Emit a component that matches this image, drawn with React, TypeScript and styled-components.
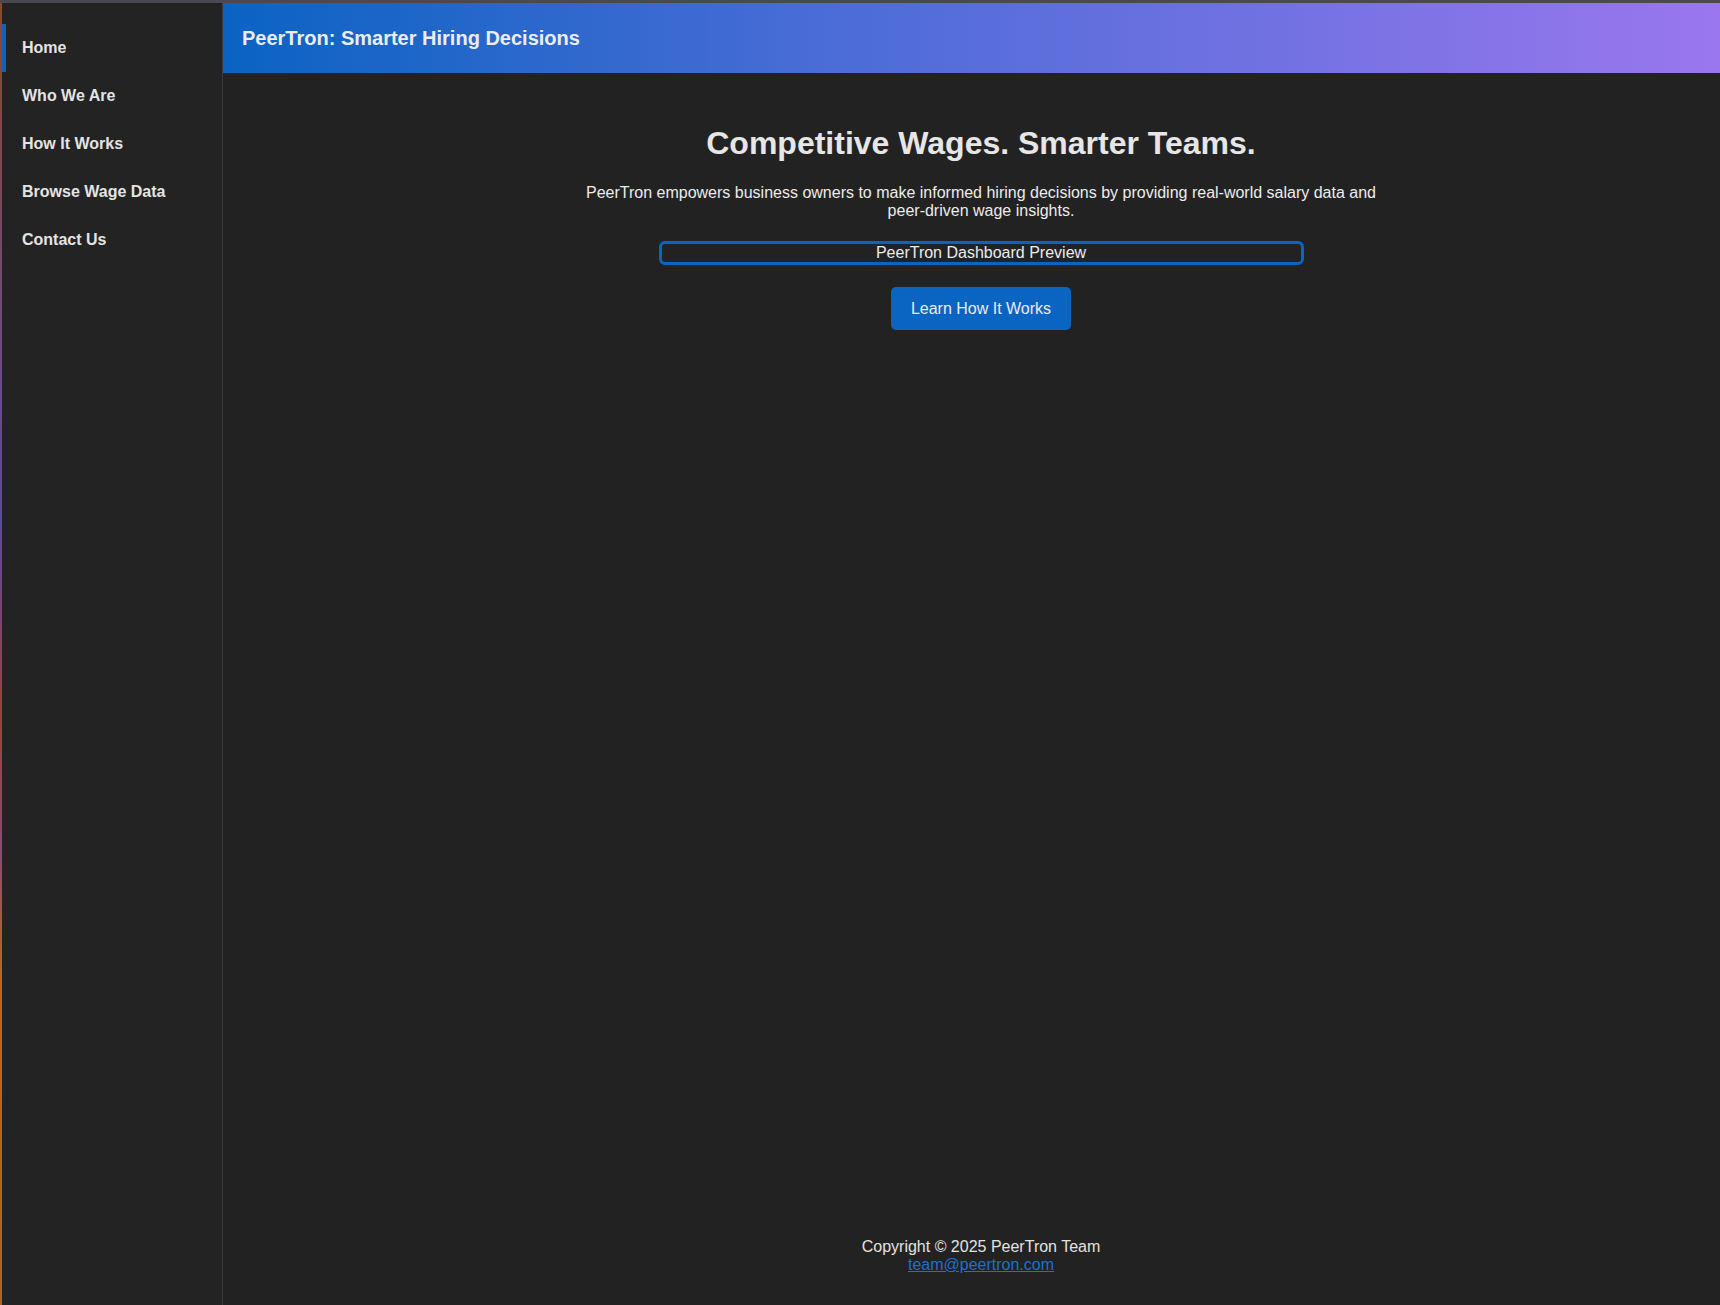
import React from "react";
import styled, { createGlobalStyle } from "styled-components";

const GlobalStyle = createGlobalStyle`
  html, body { margin: 0; padding: 0; height: 100%; }
  body {
    background: #222222;
    color: #e2e2e2;
    font-family: "Liberation Sans", Arial, sans-serif;
  }
  #root { height: 100%; }
  * { box-sizing: border-box; }
`;

const Frame = styled.div`
  height: 100vh;
  display: flex;
  flex-direction: column;
  overflow: hidden;
`;

const TopEdge = styled.div`
  height: 3px;
  flex: none;
  background: #4a4953;
`;

const Body = styled.div`
  flex: 1;
  display: flex;
  min-height: 0;
`;

const LeftEdge = styled.div`
  width: 2px;
  flex: none;
  background: linear-gradient(
    to bottom,
    #8a4a2c 0%,
    #6a4a8a 30%,
    #5a4aa0 40%,
    #a0403a 55%,
    #8a4a70 65%,
    #c0651c 75%,
    #b8601a 100%
  );
`;

const Sidebar = styled.nav`
  width: 221px;
  flex: none;
  background: #232323;
  border-right: 1px solid #3a3a3a;
  padding-top: 21px;
  display: flex;
  flex-direction: column;
`;

const NavItem = styled.a<{ $active?: boolean }>`
  display: block;
  height: 48px;
  line-height: 48px;
  padding-left: 16px;
  border-left: 4px solid ${(p) => (p.$active ? "#0a64c2" : "transparent")};
  color: #e4e4e4;
  font-size: 16px;
  font-weight: bold;
  text-decoration: none;
  cursor: pointer;
`;

const Main = styled.div`
  flex: 1;
  display: flex;
  flex-direction: column;
  min-width: 0;
`;

const Header = styled.header`
  height: 70px;
  flex: none;
  display: flex;
  align-items: center;
  padding-left: 19px;
  background: linear-gradient(to right, #0a63c3 0%, #4a6cd6 40%, #9a77ee 100%);
`;

const Title = styled.h1`
  margin: 0;
  font-size: 20px;
  font-weight: bold;
  color: #ececec;
`;

const Content = styled.section`
  flex: 1;
  display: flex;
  flex-direction: column;
  align-items: center;
  padding: 52px 0 0 19px;
  text-align: center;
`;

const Heading = styled.h2`
  margin: 0;
  font-size: 32px;
  line-height: 37px;
  font-weight: bold;
  color: #e6e6e6;
`;

const Lead = styled.p`
  margin: 22px 0 0;
  max-width: 800px;
  font-size: 16px;
  line-height: 18px;
  color: #ececec;
`;

const Preview = styled.div`
  margin-top: 21px;
  width: 645px;
  height: 24px;
  border: 3px solid #0a64c2;
  border-radius: 6px;
  font-size: 16px;
  line-height: 18px;
  color: #ececec;
`;

const Button = styled.button`
  margin-top: 22px;
  padding: 12px 20px;
  background: #0a64c2;
  color: #ececec;
  border: none;
  border-radius: 5px;
  font-family: "Liberation Sans", Arial, sans-serif;
  font-size: 16px;
  line-height: 19px;
  cursor: pointer;
`;

const Footer = styled.footer`
  flex: none;
  padding: 0 0 31px 19px;
  text-align: center;
  font-size: 16px;
  line-height: 18px;
  color: #e2e2e2;
`;

const MailLink = styled.a`
  color: #1f6fd2;
  text-decoration: underline;
`;

const navItems = ["Home", "Who We Are", "How It Works", "Browse Wage Data", "Contact Us"];

export default function App() {
  return (
    <>
      <GlobalStyle />
      <Frame>
        <TopEdge />
        <Body>
          <LeftEdge />
          <Sidebar>
            {navItems.map((item, i) => (
              <NavItem key={item} $active={i === 0}>
                {item}
              </NavItem>
            ))}
          </Sidebar>
          <Main>
            <Header>
              <Title>PeerTron: Smarter Hiring Decisions</Title>
            </Header>
            <Content>
              <Heading>Competitive Wages. Smarter Teams.</Heading>
              <Lead>
                PeerTron empowers business owners to make informed hiring decisions by providing
                real-world salary data and peer-driven wage insights.
              </Lead>
              <Preview>PeerTron Dashboard Preview</Preview>
              <Button>Learn How It Works</Button>
            </Content>
            <Footer>
              Copyright © 2025 PeerTron Team
              <br />
              <MailLink href="#">team@peertron.com</MailLink>
            </Footer>
          </Main>
        </Body>
      </Frame>
    </>
  );
}
